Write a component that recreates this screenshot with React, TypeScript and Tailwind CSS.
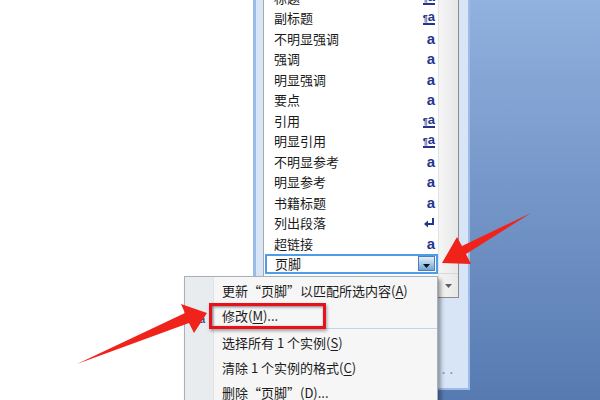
import React from 'react';

type IconKind = 'a' | 'pa' | 'p';

const styleRows: [string, IconKind][] = [
  ['标题', 'pa'],
  ['副标题', 'pa'],
  ['不明显强调', 'a'],
  ['强调', 'a'],
  ['明显强调', 'a'],
  ['要点', 'a'],
  ['引用', 'pa'],
  ['明显引用', 'pa'],
  ['不明显参考', 'a'],
  ['明显参考', 'a'],
  ['书籍标题', 'a'],
  ['列出段落', 'p'],
  ['超链接', 'a'],
];

const StyleIcon: React.FC<{ kind: IconKind }> = ({ kind }) => {
  if (kind === 'a') {
    return (
      <span className="font-['Liberation_Sans',sans-serif] text-[15px] font-bold leading-none text-[#25358f]">
        a
      </span>
    );
  }
  if (kind === 'pa') {
    return (
      <span className="flex items-end border-b-2 border-[#25358f] font-['Liberation_Sans',sans-serif] font-bold leading-none text-[#25358f]">
        <span className="text-[9px]">¶</span>
        <span className="text-[13px]">a</span>
      </span>
    );
  }
  return (
    <svg width="12" height="11" viewBox="0 0 12 11">
      <path d="M10 1v6H4" stroke="#25358f" strokeWidth="2" fill="none" />
      <path d="M1 7l4-3.5v7z" fill="#25358f" />
    </svg>
  );
};

const MenuItem: React.FC<{ children: React.ReactNode }> = ({ children }) => (
  <div className="flex h-[26px] items-center whitespace-nowrap pl-[8px] text-[#1b1b1b]">
    {children}
  </div>
);

const Key: React.FC<{ k: string }> = ({ k }) => (
  <span className="underline underline-offset-2">{k}</span>
);

export default function App() {
  return (
    <div className="relative flex h-[400px] w-[600px] overflow-hidden bg-white font-['Noto_Sans_CJK_SC',sans-serif] text-[13px] text-[#1a1a1a]">
      <div className="w-[253px] shrink-0 bg-white" />

      <div className="flex-1 bg-gradient-to-b from-[#91b1de] to-[#577ab1]">
        {/* styles pane */}
        <div className="flex h-[390px] w-[217px] flex-col border-b-2 border-l-[3px] border-r-2 border-[#9cbbe6] bg-[#d7e5f6] pl-[7px] pr-[9px]">
          <div className="flex h-[298px] border-b border-l border-r border-b-[#8c8c8c] border-l-[#a8a8a8] border-r-[#8a8a8a]">
            <div className="w-[174px] overflow-hidden bg-white">
              <div className="-mt-[13px] flex flex-col">
                {styleRows.map(([name, kind]) => (
                  <div
                    key={name}
                    className="flex h-[20.5px] items-center justify-between pl-[10px] pr-[3px] leading-none"
                  >
                    <span>{name}</span>
                    <StyleIcon kind={kind} />
                  </div>
                ))}
                <div className="ml-[1px] flex h-[20.5px] items-center justify-between border-2 border-[#4f9de6] pl-[8px] pr-[1px] leading-none">
                  <span>页脚</span>
                  <div className="flex h-[15px] w-[17px] items-end justify-center border border-[#4d80b8] bg-gradient-to-b from-[#e3f0fb] to-[#6fa4d6] pb-[2px]">
                    <svg width="7" height="4" viewBox="0 0 7 4">
                      <path d="M0 0h7L3.5 4z" fill="#111" />
                    </svg>
                  </div>
                </div>
              </div>
            </div>
            <div className="flex w-[20px] flex-col justify-end border-l border-[#e2e2e2] bg-gradient-to-r from-[#f5f5f5] to-[#e8e8e8]">
              <div className="flex h-[24px] items-center justify-center border-t border-[#d8d8d8]">
                <svg width="7" height="4" viewBox="0 0 7 4">
                  <path d="M0 0h7L3.5 4z" fill="#5f5f5f" />
                </svg>
              </div>
            </div>
          </div>
          <div className="flex flex-1 items-end justify-end pb-[13px] pr-[2px] leading-none text-[#5f78e2]">
            <span>选项</span>
            <span className="tracking-[4px]">...</span>
          </div>
        </div>
      </div>

      {/* context menu */}
      <div className="absolute left-[184px] top-[276px] flex h-[130px] w-[254px] border border-[#a7b0bb] bg-[#f6f6f6] shadow-[3px_3px_4px_rgba(0,0,0,0.35)]">
        <div className="w-[29px] shrink-0 border-r border-[#e0e3e6] bg-[#e9ecef] pt-[27px]">
          <div className="flex h-[26px] items-center justify-end pr-[8px] pt-[4px] font-['Liberation_Sans',sans-serif] text-[10px] font-bold text-[#2a49a8]">
            a
          </div>
        </div>
        <div className="flex flex-1 flex-col pt-[1px]">
          <MenuItem>
            更新“页脚”以匹配所选内容(<Key k="A" />)
          </MenuItem>
          <MenuItem>
            修改(<Key k="M" />)...
          </MenuItem>
          <div className="h-[2px] border-t border-[#c2d4ea]" />
          <MenuItem>
            选择所有 1 个实例(<Key k="S" />)
          </MenuItem>
          <MenuItem>
            清除 1 个实例的格式(<Key k="C" />)
          </MenuItem>
          <MenuItem>
            删除“页脚”(<Key k="D" />)...
          </MenuItem>
        </div>
      </div>

      {/* annotation box */}
      <div className="absolute left-[209px] top-[303px] h-[26px] w-[117px] border-[3px] border-[#e8101a] shadow-[inset_1px_1px_3px_rgba(0,0,0,0.5),1px_2px_3px_rgba(0,0,0,0.35)]" />

      {/* annotation arrows */}
      <svg className="pointer-events-none absolute inset-0" width="600" height="400" viewBox="0 0 600 400">
        <polygon points="531,213 462,246 457,237 442,263 471,264 466,254" fill="#f0231b" />
        <polygon points="77,364 185,313 181,304 207,313 194,333 189,323" fill="#f0231b" />
      </svg>
    </div>
  );
}
